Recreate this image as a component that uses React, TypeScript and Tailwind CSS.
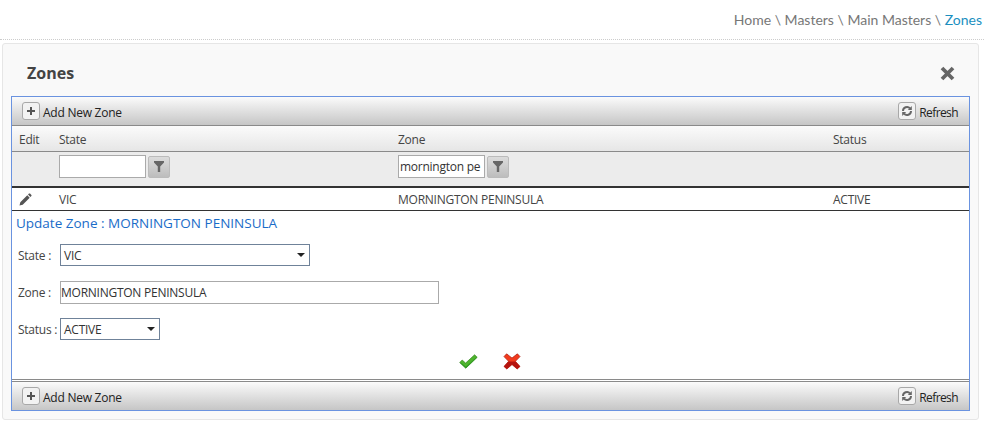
import React from "react";

const ui = "font-['Open_Sans','Noto_Sans',sans-serif]";

function PlusIcon() {
  return (
    <svg width="10" height="10" viewBox="0 0 10 10">
      <path d="M5 1v8M1 5h8" stroke="#555" strokeWidth="2" />
    </svg>
  );
}

function RefreshIcon() {
  return (
    <svg width="12" height="12" viewBox="0 0 12 12" fill="none">
      <path d="M2 6a4 4 0 0 1 7-2.6" stroke="#666" strokeWidth="2" />
      <path d="M10 6a4 4 0 0 1-7 2.6" stroke="#666" strokeWidth="2" />
      <path d="M10.8 1v4h-4z" fill="#666" />
      <path d="M1.2 11V7h4z" fill="#666" />
    </svg>
  );
}

function FilterButton() {
  return (
    <button className="w-[22px] h-[22px] ml-[2px] flex items-center justify-center rounded-[2px] border border-[#bbbbbb] bg-gradient-to-b from-[#dcdcdc] to-[#bdbdbd]">
      <svg width="10" height="11" viewBox="0 0 10 11">
        <path d="M0 0h10v1.5L6.2 5.5V11H3.8V5.5L0 1.5z" fill="#666" />
      </svg>
    </button>
  );
}

function Toolbar() {
  return (
    <div className="h-[28px] flex items-center justify-between pl-[10px] pr-[11px] bg-gradient-to-b from-[#fbfbfb] to-[#c6c6c6]">
      <div className="flex items-center">
        <span className="w-[18px] h-[18px] flex items-center justify-center rounded-[3px] border border-[#a8a8a8] bg-[#f2f2f2]">
          <PlusIcon />
        </span>
        <span className="ml-[3px] pt-[3px] text-[12px] leading-[16px] tracking-[-0.25px] text-[#222]">Add New Zone</span>
      </div>
      <div className="flex items-center">
        <span className="w-[18px] h-[18px] flex items-center justify-center rounded-[3px] border border-[#a8a8a8] bg-[#f2f2f2]">
          <RefreshIcon />
        </span>
        <span className="ml-[3px] pt-[3px] text-[12px] leading-[16px] tracking-[-0.6px] text-[#222]">Refresh</span>
      </div>
    </div>
  );
}

function Caret() {
  return <span className="w-0 h-0 border-x-[4px] border-x-transparent border-t-[4px] border-t-[#222]" />;
}

function FormSelect({ value, width }: { value: string; width: string }) {
  return (
    <div className={`${width} h-[22px] flex items-center justify-between pl-[3px] pr-[4px] bg-white border border-[#6f8299] text-[12px] tracking-[-0.25px] text-[#333]`}>
      <span className="pt-[1px]">{value}</span>
      <Caret />
    </div>
  );
}

export default function App() {
  return (
    <div className={`w-[984px] h-[423px] bg-white overflow-hidden ${ui}`}>
      <div className="h-[40px] border-b border-dotted border-[#cccccc] flex items-center justify-end pr-[2px]">
        <div className="font-['Lato',sans-serif] text-[14px] text-[#777777] whitespace-pre">
          Home \ Masters \ Main Masters \ <span className="text-[#1b8fbf]">Zones</span>
        </div>
      </div>

      <div className="mt-[3px] ml-[2px] w-[977px] h-[377px] rounded-[3px] border border-[#e6e6e6] bg-[#f9f9f9] pt-[17px] px-[8px]">
        <div className="h-[35px] flex items-start justify-between pl-[16px] pr-[15px]">
          <span className="text-[16px] leading-[24px] font-bold text-[#444444]">Zones</span>
          <svg className="mt-[5px]" width="15" height="15" viewBox="0 0 15 15">
            <path d="M2 2l11 11M13 2L2 13" stroke="#666" strokeWidth="3.8" />
          </svg>
        </div>

        <div className="w-[959px] h-[315px] border border-[#6a93e0] bg-white flex flex-col">
          <Toolbar />

          <div className="border-t border-[#8a8a8a] h-[26px] pt-[2px] grid grid-cols-[40px_339px_435px_1fr] items-center bg-gradient-to-b from-[#fbfbfb] to-[#e6e6e6] text-[12px] tracking-[-0.25px] text-[#444]">
            <span className="pl-[7px]">Edit</span>
            <span className="pl-[7px]">State</span>
            <span className="pl-[7px]">Zone</span>
            <span className="pl-[7px]">Status</span>
          </div>

          <div className="border-t border-[#8a8a8a] h-[35px] pt-[3px] grid grid-cols-[40px_339px_435px_1fr] items-start bg-[#ececec]">
            <span />
            <div className="pl-[7px] flex items-center">
              <input readOnly value="" className="w-[87px] h-[23px] bg-white border border-[#aaaaaa] outline-none" />
              <FilterButton />
            </div>
            <div className="pl-[7px] flex items-center">
              <input readOnly value="mornington pe" className="w-[87px] h-[23px] px-[1px] bg-white border border-[#aaaaaa] outline-none text-[12px] tracking-[-0.25px] text-[#333]" />
              <FilterButton />
            </div>
            <span />
          </div>

          <div className="border-t-2 border-b border-t-[#333333] border-b-[#333333] h-[25px] pt-[1px] grid grid-cols-[40px_339px_435px_1fr] items-center bg-white text-[12px] tracking-[-0.25px] text-[#444]">
            <span className="pl-[7px]">
              <svg width="13" height="13" viewBox="0 0 13 13">
                <path d="M0.5 12.5l0.8-3.2 7-7 2.4 2.4-7 7zM9 1.6l1-1q.5-.4 1 0l1.4 1.4q.4.5 0 1l-1 1z" fill="#555" />
              </svg>
            </span>
            <span className="pl-[7px]">VIC</span>
            <span className="pl-[7px]">MORNINGTON PENINSULA</span>
            <span className="pl-[7px]">ACTIVE</span>
          </div>

          <div className="flex-1 flex flex-col pl-[4px]">
            <div className="mt-[2px] text-[13.5px] leading-[20px] text-[#1a6cc8]">Update Zone : MORNINGTON PENINSULA</div>

            <div className="mt-[11px] flex items-center h-[22px] pl-[2px] text-[12px] tracking-[-0.25px] text-[#444]">
              <span className="w-[42px] shrink-0 pt-[1px]">State :</span>
              <FormSelect value="VIC" width="w-[250px]" />
            </div>
            <div className="mt-[15px] flex items-center h-[23px] pl-[2px] text-[12px] tracking-[-0.25px] text-[#444]">
              <span className="w-[42px] shrink-0">Zone :</span>
              <input readOnly value="MORNINGTON PENINSULA" className="w-[379px] h-[23px] px-0 bg-white border border-[#aaaaaa] outline-none text-[12px] tracking-[-0.25px] text-[#333]" />
            </div>
            <div className="mt-[14px] flex items-center h-[22px] pl-[2px] text-[12px] tracking-[-0.25px] text-[#444]">
              <span className="w-[42px] shrink-0 pt-[2px]">Status :</span>
              <FormSelect value="ACTIVE" width="w-[100px]" />
            </div>

            <div className="mt-[13px] flex items-center pl-[443px] gap-[25px]">
              <svg width="19" height="15" viewBox="0 0 19 15">
                <path d="M0.7 8.6L3.2 6l3.4 3.1L15.6 0.8l2.6 2.5L6.8 14.2z" fill="#4fb52e" stroke="#3c8a28" strokeWidth="0.7" />
                <path d="M3 9.4l3.8 3.4L17 3.6l1.2-.3L6.8 14.2 0.7 8.6z" fill="#2f9a22" />
              </svg>
              <svg width="18" height="17" viewBox="0 0 18 17">
                <path d="M1 3.6L3.6.8 9 5l5.4-4.2L17 3.6 12.4 8.3 17 13.4 14.2 16 9 11.6 3.8 16 1 13.4 5.6 8.3z" fill="#f23a1c" stroke="#a81a10" strokeWidth="0.7" />
                <path d="M5.6 8.6H12.4L17 13.4 14.2 16 9 11.6 3.8 16 1 13.4z" fill="#b5140f" />
              </svg>
            </div>
          </div>

          <div className="h-[3px] border-y border-[#8a8a8a] bg-white" />
          <Toolbar />
        </div>
      </div>
    </div>
  );
}
